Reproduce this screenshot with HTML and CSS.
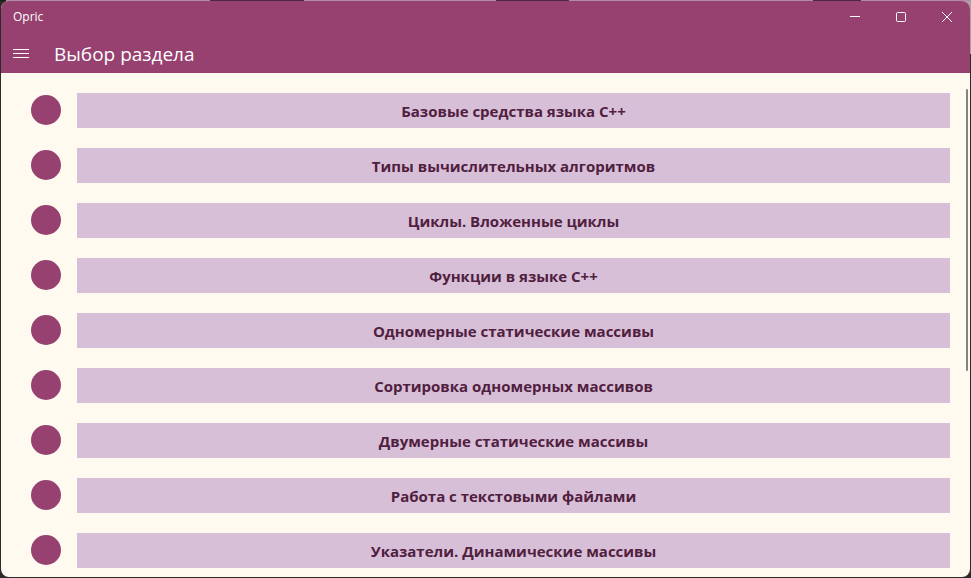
FILE: index.html
```html
<!DOCTYPE html>
<html lang="ru">
<head>
<meta charset="utf-8">
<title>Opric</title>
<link rel="stylesheet" href="styles.css">
</head>
<body>
<div class="window">
  <header class="header">
    <div class="titlebar">
      <span class="app-name">Opric</span>
      <div class="window-controls">
        <button class="control" type="button" aria-label="Свернуть"><svg width="12" height="12" viewBox="0 0 12 12"><path d="M1 5.5h10"/></svg></button>
        <button class="control" type="button" aria-label="Развернуть"><svg width="12" height="12" viewBox="0 0 12 12"><rect x="1.5" y="1.5" width="9" height="9" rx="1"/></svg></button>
        <button class="control" type="button" aria-label="Закрыть"><svg width="12" height="12" viewBox="0 0 12 12"><path d="M1 1l10 10M11 1L1 11"/></svg></button>
      </div>
    </div>
    <div class="navbar">
      <button class="menu" type="button" aria-label="Меню"><svg width="16" height="10" viewBox="0 0 16 10"><path d="M0 .5h16M0 4.5h16M0 8.5h16"/></svg></button>
      <h1 class="title">Выбор раздела</h1>
    </div>
  </header>
  <main class="content">
    <ul class="sections">
      <li class="row"><span class="dot"></span><button class="section" type="button">Базовые средства языка C++</button></li>
      <li class="row"><span class="dot"></span><button class="section" type="button">Типы вычислительных алгоритмов</button></li>
      <li class="row"><span class="dot"></span><button class="section" type="button">Циклы. Вложенные циклы</button></li>
      <li class="row"><span class="dot"></span><button class="section" type="button">Функции в языке C++</button></li>
      <li class="row"><span class="dot"></span><button class="section" type="button">Одномерные статические массивы</button></li>
      <li class="row"><span class="dot"></span><button class="section" type="button">Сортировка одномерных массивов</button></li>
      <li class="row"><span class="dot"></span><button class="section" type="button">Двумерные статические массивы</button></li>
      <li class="row"><span class="dot"></span><button class="section" type="button">Работа с текстовыми файлами</button></li>
      <li class="row"><span class="dot"></span><button class="section" type="button">Указатели. Динамические массивы</button></li>
    </ul>
    <div class="scroll-thumb"></div>
  </main>
</div>
</body>
</html>
```
FILE: styles.css
```css
* {
  box-sizing: border-box;
}

body {
  margin: 0;
  height: 100vh;
  padding: 1px;
  overflow: hidden;
  font-family: "Open Sans", "Noto Sans", sans-serif;
  background:
    linear-gradient(90deg, #1b1b1b 6px, #b28ba6 6px 210px, #4f2740 210px 304px, #b28ba6 304px 496px, #4f2740 496px 569px, #b28ba6 569px 813px, #4f2740 813px 861px, #b28ba6 861px) top / 100% 1px no-repeat,
    linear-gradient(#a9a3a8, #a9a3a8) right top / 8px 54px no-repeat,
    #2b2b2b;
}

.window {
  display: flex;
  flex-direction: column;
  height: 100%;
  overflow: hidden;
  border-radius: 8px;
  background: #fffaf0;
}

.header {
  flex: none;
  color: #fff;
  background: #96416f;
}

.titlebar {
  display: flex;
  justify-content: space-between;
  height: 32px;
  padding-left: 12px;
}

.app-name {
  font-size: 12px;
  line-height: 32px;
}

.window-controls {
  display: flex;
}

.control,
.menu {
  display: flex;
  align-items: center;
  justify-content: center;
  padding: 0;
  border: 0;
  background: none;
}

.control {
  width: 46px;
}

svg {
  fill: none;
  stroke: #fff;
  stroke-width: 1;
}

.navbar {
  display: flex;
  align-items: center;
  height: 40px;
  padding-top: 2px;
}

.menu {
  width: 40px;
  height: 38px;
}

.title {
  margin: 0 0 0 13px;
  font-size: 19px;
  font-weight: 400;
  line-height: 38px;
}

.content {
  position: relative;
  flex: 1;
  min-height: 0;
}

.sections {
  display: flex;
  flex-direction: column;
  gap: 20px;
  margin: 0;
  padding: 20px 20px 8px 30px;
  list-style: none;
}

.row {
  display: flex;
  align-items: flex-start;
  gap: 16px;
}

.dot {
  flex: none;
  width: 30px;
  height: 30px;
  margin-top: 2px;
  border-radius: 50%;
  background: #96416f;
}

.section {
  flex: 1;
  height: 35px;
  padding: 0;
  border: 0;
  font: 700 15px "Open Sans", "Noto Sans", sans-serif;
  color: #50203f;
  background: #d8bfd8;
}

.scroll-thumb {
  position: absolute;
  top: 16px;
  right: 2px;
  width: 2px;
  height: 282px;
  border-radius: 1px;
  background: #858380;
}
```
